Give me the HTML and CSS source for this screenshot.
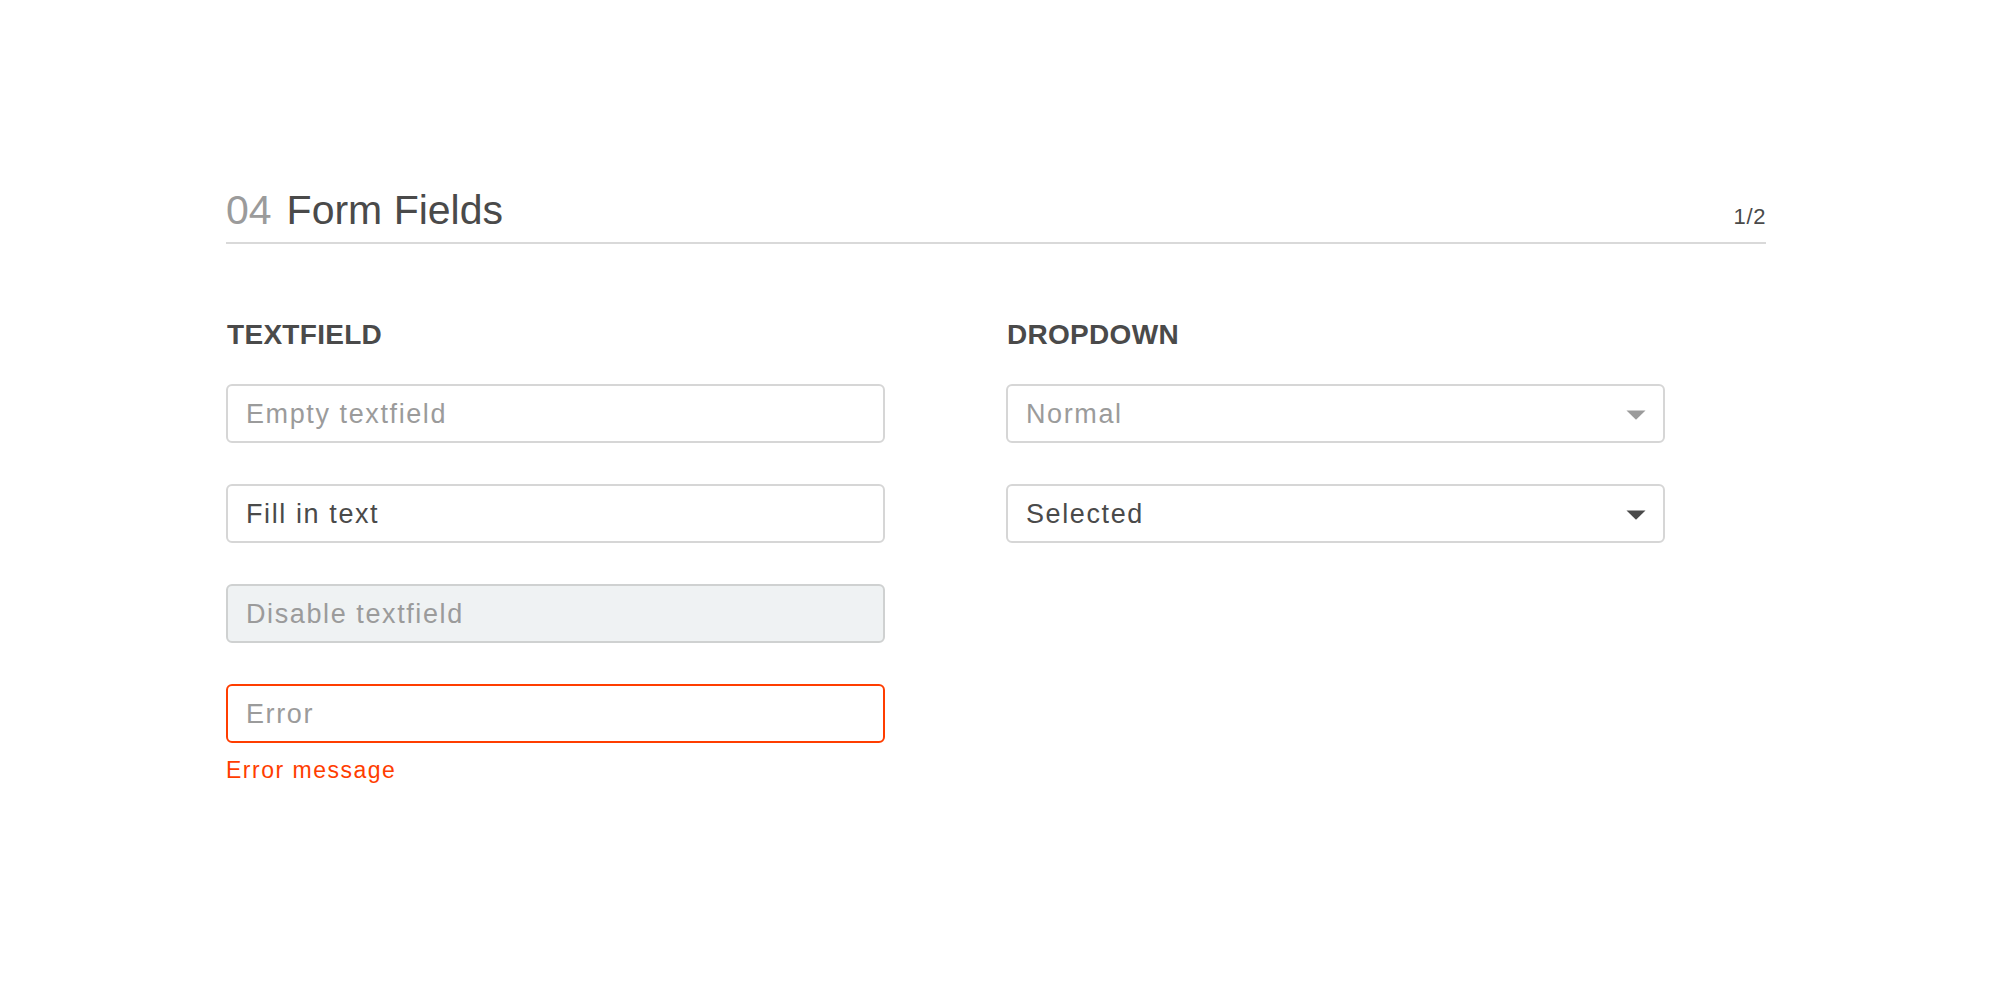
FILE: index.html
```html
<!DOCTYPE html>
<html lang="en">
<head>
<meta charset="utf-8">
<title>Form Fields</title>
<link rel="stylesheet" href="styles.css">
</head>
<body>
<main class="page">
  <header class="header">
    <h1 class="title"><span class="num">04</span><span class="name">Form Fields</span></h1>
    <span class="pager">1/2</span>
  </header>
  <section class="columns">
    <div class="column">
      <h2 class="label">TEXTFIELD</h2>
      <div class="fields">
        <div class="field"><span class="placeholder">Empty textfield</span></div>
        <div class="field"><span class="value">Fill in text</span></div>
        <div class="field field-disabled"><span class="placeholder">Disable textfield</span></div>
        <div class="field-group">
          <div class="field field-error"><span class="placeholder">Error</span></div>
          <div class="error-msg">Error message</div>
        </div>
      </div>
    </div>
    <div class="column">
      <h2 class="label">DROPDOWN</h2>
      <div class="fields">
        <div class="field dropdown"><span class="placeholder">Normal</span>
          <svg class="caret caret-light" width="20" height="10" viewBox="0 0 20 10"><path d="M0.5 0.5 H19.5 L10 9.8 Z" /></svg>
        </div>
        <div class="field dropdown"><span class="value">Selected</span>
          <svg class="caret caret-dark" width="20" height="10" viewBox="0 0 20 10"><path d="M0.5 0.5 H19.5 L10 9.8 Z" /></svg>
        </div>
      </div>
    </div>
  </section>
</main>
</body>
</html>
```

FILE: styles.css
```css
* { box-sizing: border-box; }
html, body { margin: 0; padding: 0; background: #ffffff; }
body {
  font-family: "Liberation Sans", Arial, Helvetica, sans-serif;
  color: #4a4a4a;
}
.page {
  width: 1540px;
  margin-left: 226px;
  padding-top: 187px;
}
.header {
  display: flex;
  justify-content: space-between;
  align-items: baseline;
  padding-bottom: 9px;
  border-bottom: 2px solid #d9d9d9;
}
.title {
  margin: 0;
  font-size: 41px;
  line-height: 46px;
  font-weight: normal;
  color: #4a4a4a;
}
.num { color: #9b9b9b; margin-right: 15px; }
.pager {
  font-size: 22px;
  letter-spacing: 0.6px;
  color: #4a4a4a;
}
.columns {
  display: flex;
  gap: 121px;
  margin-top: 74px;
}
.column { width: 659px; }
.label {
  margin: 0 0 33px 0;
  font-size: 28px;
  line-height: 33px;
  font-weight: bold;
  letter-spacing: 0.3px;
  color: #4a4a4a;
  padding-left: 1px;
}
.fields {
  display: flex;
  flex-direction: column;
  gap: 41px;
}
.field {
  height: 59px;
  border: 2px solid #d6d6d6;
  border-radius: 6px;
  background: #fff;
  display: flex;
  align-items: center;
  padding: 2px 18px 0 18px;
  font-size: 27px;
  letter-spacing: 1.6px;
}
.placeholder { color: #9b9b9b; }
.value { color: #4a4a4a; }
.field-disabled {
  background: #eff2f3;
  border-color: #cfd1d1;
}
.field-error { border-color: #ff3d00; }
.error-msg {
  margin-top: 14px;
  font-size: 23px;
  line-height: 26px;
  letter-spacing: 1.5px;
  color: #ff3d00;
}
.dropdown { justify-content: space-between; padding-right: 17px; }
.caret { display: block; margin-top: 0; }
.caret-light path { fill: #9b9b9b; }
.caret-dark path { fill: #4a4a4a; }
```
